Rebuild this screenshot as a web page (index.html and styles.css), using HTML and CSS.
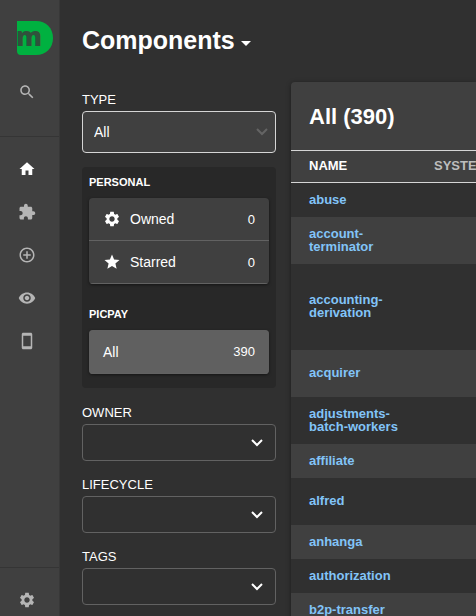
FILE: index.html
```html
<!DOCTYPE html>
<html lang="en">
<head>
<meta charset="utf-8">
<meta name="viewport" content="width=device-width, initial-scale=1">
<title>Components</title>
<link rel="stylesheet" href="styles.css">
</head>
<body>
<div class="app">
  <aside class="sidebar">
    <a class="logo" href="#" aria-label="Catalog home">
      <svg width="37" height="35" viewBox="0 0 37 35" aria-hidden="true">
        <path fill="#00b140" d="M0 0h19c10 0 17 7 17 17s-7 17-17 17H4q-4 0-4-4z"/>
        <text class="logo-letter" x="-1" y="25">m</text>
      </svg>
    </a>
    <button class="side-item" type="button" aria-label="Search">
      <svg class="icon" viewBox="0 0 24 24"><path d="M15.5 14h-.79l-.28-.27C15.41 12.59 16 11.11 16 9.5 16 5.91 13.09 3 9.5 3S3 5.91 3 9.5 5.91 16 9.5 16c1.61 0 3.09-.59 4.23-1.57l.27.28v.79l5 4.99L20.49 19l-4.99-5zm-6 0C7.01 14 5 11.99 5 9.5S7.01 5 9.5 5 14 7.01 14 9.5 11.99 14 9.5 14z"/></svg>
    </button>
    <nav class="side-nav">
      <a class="side-item current" href="#" aria-label="Home">
        <svg class="icon" viewBox="0 0 24 24"><path d="M10 20v-6h4v6h5v-8h3L12 3 2 12h3v8z"/></svg>
      </a>
      <a class="side-item" href="#" aria-label="APIs">
        <svg class="icon" viewBox="0 0 24 24"><path d="M20.5 11H19V7c0-1.1-.9-2-2-2h-4V3.5C13 2.12 11.88 1 10.5 1S8 2.12 8 3.5V5H4c-1.1 0-1.99.9-1.99 2v3.8H3.5c1.49 0 2.7 1.21 2.7 2.7s-1.21 2.7-2.7 2.7H2V20c0 1.1.9 2 2 2h3.8v-1.5c0-1.49 1.21-2.7 2.7-2.7 1.49 0 2.7 1.21 2.7 2.7V22H17c1.1 0 2-.9 2-2v-4h1.5c1.38 0 2.5-1.12 2.5-2.5S21.88 11 20.5 11z"/></svg>
      </a>
      <a class="side-item" href="#" aria-label="Create">
        <svg class="icon" viewBox="0 0 24 24"><path d="M13 7h-2v4H7v2h4v4h2v-4h4v-2h-4V7zm-1-5C6.48 2 2 6.48 2 12s4.48 10 10 10 10-4.48 10-10S17.52 2 12 2zm0 18c-4.41 0-8-3.59-8-8s3.59-8 8-8 8 3.59 8 8-3.59 8-8 8z"/></svg>
      </a>
      <a class="side-item" href="#" aria-label="Explore">
        <svg class="icon" viewBox="0 0 24 24"><path d="M12 4.5C7 4.5 2.73 7.61 1 12c1.73 4.39 6 7.5 11 7.5s9.27-3.11 11-7.5c-1.73-4.39-6-7.5-11-7.5zM12 17c-2.76 0-5-2.24-5-5s2.24-5 5-5 5 2.24 5 5-2.24 5-5 5zm0-8c-1.66 0-3 1.34-3 3s1.34 3 3 3 3-1.34 3-3-1.34-3-3-3z"/></svg>
      </a>
      <a class="side-item" href="#" aria-label="Mobile">
        <svg class="icon" viewBox="0 0 24 24"><path d="M17 1.01L7 1c-1.1 0-1.99.9-1.99 2v18c0 1.1.89 2 1.99 2h10c1.1 0 2-.9 2-2V3c0-1.1-.9-1.99-2-1.99zM17 19H7V5h10v14z"/></svg>
      </a>
    </nav>
    <div class="side-foot">
      <a class="side-item" href="#" aria-label="Settings">
        <svg class="icon" viewBox="0 0 24 24"><path d="M19.14 12.94c.04-.3.06-.61.06-.94 0-.32-.02-.64-.07-.94l2.03-1.58c.18-.14.23-.41.12-.61l-1.92-3.32c-.12-.22-.37-.29-.59-.22l-2.39.96c-.5-.38-1.03-.7-1.62-.94l-.36-2.54c-.04-.24-.24-.41-.48-.41h-3.84c-.24 0-.43.17-.47.41l-.36 2.54c-.59.24-1.13.57-1.62.94l-2.39-.96c-.22-.08-.47 0-.59.22L2.74 8.87c-.12.21-.08.47.12.61l2.03 1.58c-.05.3-.09.63-.09.94s.02.64.07.94l-2.03 1.58c-.18.14-.23.41-.12.61l1.92 3.32c.12.22.37.29.59.22l2.39-.96c.5.38 1.03.7 1.62.94l.36 2.54c.05.24.24.41.48.41h3.84c.24 0 .44-.17.47-.41l.36-2.54c.59-.24 1.13-.56 1.62-.94l2.39.96c.22.08.47 0 .59-.22l1.92-3.32c.12-.22.07-.47-.12-.61l-2.01-1.58zM12 15.6c-1.98 0-3.6-1.62-3.6-3.6s1.62-3.6 3.6-3.6 3.6 1.62 3.6 3.6-1.62 3.6-3.6 3.6z"/></svg>
      </a>
    </div>
  </aside>

  <main class="main">
    <h1 class="title">
      <button class="title-button" type="button">Components
        <svg class="caret" viewBox="0 0 10 5" aria-hidden="true"><path d="M0 0h10L5 5z"/></svg>
      </button>
    </h1>
    <div class="content">
      <section class="filters">
        <div class="field">
          <label class="label" for="type">TYPE</label>
          <div class="select-wrap type">
            <select class="select" id="type"><option>All</option></select>
            <svg class="chevron" viewBox="0 0 12 8" aria-hidden="true"><path d="M1 1l5 5 5-5"/></svg>
          </div>
        </div>

        <div class="groups">
          <h2 class="group-title">PERSONAL</h2>
          <div class="group">
            <button class="group-item" type="button">
              <svg class="icon" viewBox="0 0 24 24"><path d="M19.14 12.94c.04-.3.06-.61.06-.94 0-.32-.02-.64-.07-.94l2.03-1.58c.18-.14.23-.41.12-.61l-1.92-3.32c-.12-.22-.37-.29-.59-.22l-2.39.96c-.5-.38-1.03-.7-1.62-.94l-.36-2.54c-.04-.24-.24-.41-.48-.41h-3.84c-.24 0-.43.17-.47.41l-.36 2.54c-.59.24-1.13.57-1.62.94l-2.39-.96c-.22-.08-.47 0-.59.22L2.74 8.87c-.12.21-.08.47.12.61l2.03 1.58c-.05.3-.09.63-.09.94s.02.64.07.94l-2.03 1.58c-.18.14-.23.41-.12.61l1.92 3.32c.12.22.37.29.59.22l2.39-.96c.5.38 1.03.7 1.62.94l.36 2.54c.05.24.24.41.48.41h3.84c.24 0 .44-.17.47-.41l.36-2.54c.59-.24 1.13-.56 1.62-.94l2.39.96c.22.08.47 0 .59-.22l1.92-3.32c.12-.22.07-.47-.12-.61l-2.01-1.58zM12 15.6c-1.98 0-3.6-1.62-3.6-3.6s1.62-3.6 3.6-3.6 3.6 1.62 3.6 3.6-1.62 3.6-3.6 3.6z"/></svg>
              <span class="item-name">Owned</span><span class="item-count">0</span>
            </button>
            <button class="group-item" type="button">
              <svg class="icon" viewBox="0 0 24 24"><path d="M12 17.27L18.18 21l-1.64-7.03L22 9.24l-7.19-.61L12 2 9.19 8.63 2 9.24l5.46 4.73L5.82 21z"/></svg>
              <span class="item-name">Starred</span><span class="item-count">0</span>
            </button>
          </div>
          <h2 class="group-title">PICPAY</h2>
          <div class="group">
            <button class="group-item selected" type="button">
              <span class="item-name">All</span><span class="item-count">390</span>
            </button>
          </div>
        </div>

        <div class="field">
          <label class="label" for="owner">OWNER</label>
          <div class="select-wrap">
            <select class="select" id="owner"><option></option></select>
            <svg class="chevron" viewBox="0 0 12 8" aria-hidden="true"><path d="M1 1l5 5 5-5"/></svg>
          </div>
        </div>
        <div class="field">
          <label class="label" for="lifecycle">LIFECYCLE</label>
          <div class="select-wrap">
            <select class="select" id="lifecycle"><option></option></select>
            <svg class="chevron" viewBox="0 0 12 8" aria-hidden="true"><path d="M1 1l5 5 5-5"/></svg>
          </div>
        </div>
        <div class="field">
          <label class="label" for="tags">TAGS</label>
          <div class="select-wrap">
            <select class="select" id="tags"><option></option></select>
            <svg class="chevron" viewBox="0 0 12 8" aria-hidden="true"><path d="M1 1l5 5 5-5"/></svg>
          </div>
        </div>
      </section>

      <section class="card">
        <h2 class="card-title">All (390)</h2>
        <table class="table">
          <thead><tr><th class="name-col sorted">NAME</th><th>SYSTEM</th></tr></thead>
          <tbody>
            <tr><td><a href="#">abuse</a></td><td></td></tr>
            <tr class="medium"><td><a href="#">account-<wbr>terminator</a></td><td></td></tr>
            <tr class="tall"><td><a href="#">accounting-<wbr>derivation</a></td><td></td></tr>
            <tr class="medium"><td><a href="#">acquirer</a></td><td></td></tr>
            <tr class="medium"><td><a href="#">adjustments-<wbr>batch-workers</a></td><td></td></tr>
            <tr><td><a href="#">affiliate</a></td><td></td></tr>
            <tr class="medium"><td><a href="#">alfred</a></td><td></td></tr>
            <tr><td><a href="#">anhanga</a></td><td></td></tr>
            <tr><td><a href="#">authorization</a></td><td></td></tr>
            <tr><td><a href="#">b2p-transfer</a></td><td></td></tr>
          </tbody>
        </table>
      </section>
    </div>
  </main>
</div>
</body>
</html>
```
FILE: styles.css
```css
* {
  box-sizing: border-box;
}

body {
  margin: 0;
  background: #303030;
  color: #fff;
  font-family: "Liberation Sans", Arial, sans-serif;
  font-size: 14px;
}

button,
select {
  margin: 0;
  padding: 0;
  border: 0;
  border-radius: 0;
  background: none;
  color: inherit;
  font: inherit;
}

a {
  text-decoration: none;
}

.app {
  display: grid;
  grid-template-columns: 60px minmax(0, 1fr);
  grid-template-rows: minmax(0, 1fr);
  height: 100vh;
  overflow: hidden;
}

.icon {
  display: block;
  width: 18px;
  height: 18px;
  fill: currentColor;
}

/* Sidebar */
.sidebar {
  display: flex;
  flex-direction: column;
  align-items: stretch;
  padding-top: 21px;
  background: #404040;
  border-right: 1px solid #383838;
}

.logo {
  height: 49px;
  padding-left: 17px;
}

.logo svg {
  display: block;
}

.logo-letter {
  fill: #30513c;
  font-family: "Open Sans", sans-serif;
  font-size: 26px;
  font-weight: 800;
}

.side-item {
  display: flex;
  align-items: center;
  height: 43px;
  padding-left: 18px;
  color: #b5b5b5;
}

.side-item.current {
  color: #fff;
}

.side-nav {
  flex: 1;
  margin-top: 23px;
  padding-top: 10px;
  border-top: 1px solid #353535;
}

.side-foot {
  height: 49px;
  padding-top: 10px;
  border-top: 1px solid #353535;
}

/* Page */
.main {
  padding: 24px 0 0 22px;
}

.title {
  margin: 0;
  font-size: 25px;
  line-height: 32px;
}

.title-button {
  display: flex;
  align-items: center;
  gap: 6px;
}

.caret {
  width: 10px;
  height: 5px;
  margin-top: 6px;
  fill: #fff;
}

.content {
  display: grid;
  grid-template-columns: 194px minmax(0, 1fr);
  gap: 15px;
  align-items: start;
  margin-top: 26px;
}

/* Filters */
.filters {
  padding-top: 10px;
}

.field {
  margin-bottom: 16px;
}

.field:first-child {
  margin-bottom: 14px;
}

.label {
  display: block;
  height: 19px;
  font-size: 13px;
  line-height: 16px;
}

.select-wrap {
  display: flex;
  position: relative;
  height: 37px;
  border: 1px solid #626262;
  border-radius: 4px;
}

.select-wrap.type {
  height: 42px;
  background: #404040;
  border-color: #d5d5d5;
}

.select {
  width: 100%;
  padding-left: 11px;
  appearance: none;
}

.chevron {
  position: absolute;
  top: 50%;
  right: 12px;
  width: 12px;
  height: 8px;
  margin-top: -4px;
  fill: none;
  stroke: #fff;
  stroke-width: 2;
  pointer-events: none;
}

.type .chevron {
  right: 7px;
  stroke: #646464;
}

.groups {
  margin: 14px 0 17px;
  padding: 7px 7px 14px;
  background: #282828;
  border-radius: 4px;
}

.group-title {
  margin: 0;
  font-size: 11px;
  line-height: 16px;
}

.group {
  margin: 8px 0 22px;
  background: #404040;
  border-radius: 4px;
  box-shadow: 0 1px 3px rgba(0, 0, 0, 0.5);
  overflow: hidden;
}

.group:last-child {
  margin-bottom: 0;
}

.group-item {
  display: flex;
  align-items: center;
  width: 100%;
  height: 43px;
  padding: 0 14px;
  border-bottom: 1px solid #626262;
  text-align: left;
}

.group-item .icon {
  margin-right: 9px;
}

.item-name {
  flex: 1;
}

.item-count {
  font-size: 13px;
}

.group-item.selected {
  height: 44px;
  background: #606060;
}

/* Table */
.card {
  background: #404040;
  border-radius: 4px 0 0;
  box-shadow: 0 1px 5px rgba(0, 0, 0, 0.4);
  overflow: hidden;
}

.card-title {
  margin: 0;
  padding: 21px 18px 19px;
  font-size: 22px;
  line-height: 28px;
}

.table {
  width: 400px;
  border-collapse: separate;
  border-spacing: 0;
  table-layout: fixed;
  font-size: 13px;
  line-height: 13px;
}

.table th {
  height: 33px;
  padding: 0 0 2px 18px;
  border: solid #d5d5d5;
  border-width: 1px 0;
  color: #bdbdbd;
  text-align: left;
}

.table th.sorted {
  color: #fff;
}

.name-col {
  width: 125px;
}

.table td {
  height: 34px;
  padding: 0 10px 2px 18px;
}

.table .medium td {
  height: 47px;
}

.table .tall td {
  height: 86px;
}

.table tbody tr:nth-child(odd) {
  background: #303030;
}

.table a {
  color: #82c4f8;
  font-weight: bold;
}
```
